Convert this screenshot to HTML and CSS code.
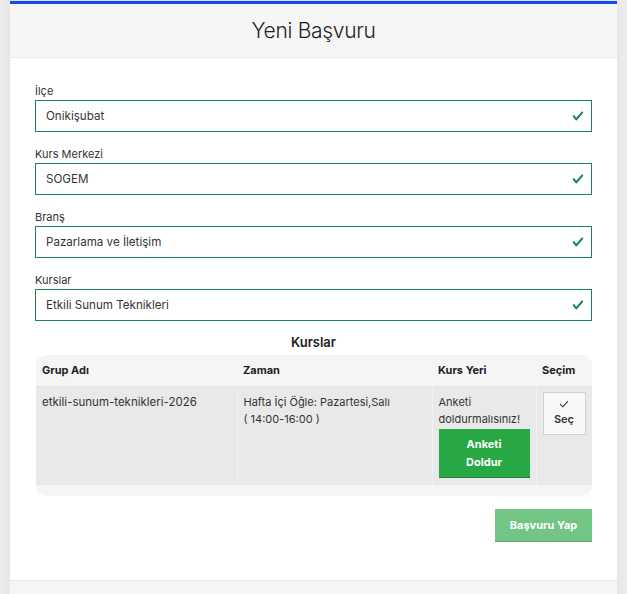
FILE: index.html
```html
<!DOCTYPE html>
<html lang="tr">
<head>
    <meta charset="UTF-8">
    <meta name="viewport" content="width=device-width, initial-scale=1.0">
    <title>Yeni Başvuru</title>
    <link rel="stylesheet" href="styles.css">
</head>
<body>
    <div class="card">
        <div class="card-header">
            <h2>Yeni Başvuru</h2>
        </div>

        <div class="card-body">
            <!-- İlçe -->
            <div class="form-group">
                <label>İlçe</label>
                <div class="field is-valid">
                    <span>Onikişubat</span>
                    <svg class="valid-icon" viewBox="0 0 8 8"><path d="M2.3 6.73.6 4.53c-.4-1.04.46-1.4 1.1-.8l1.1 1.4 3.4-3.8c.6-.63 1.6-.27 1.2.7l-4 4.6c-.43.5-.8.4-1.1.1z"/></svg>
                </div>
            </div>

            <!-- Kurs Merkezi -->
            <div class="form-group">
                <label>Kurs Merkezi</label>
                <div class="field is-valid">
                    <span>SOGEM</span>
                    <svg class="valid-icon" viewBox="0 0 8 8"><path d="M2.3 6.73.6 4.53c-.4-1.04.46-1.4 1.1-.8l1.1 1.4 3.4-3.8c.6-.63 1.6-.27 1.2.7l-4 4.6c-.43.5-.8.4-1.1.1z"/></svg>
                </div>
            </div>

            <!-- Branş -->
            <div class="form-group">
                <label>Branş</label>
                <div class="field is-valid">
                    <span>Pazarlama ve İletişim</span>
                    <svg class="valid-icon" viewBox="0 0 8 8"><path d="M2.3 6.73.6 4.53c-.4-1.04.46-1.4 1.1-.8l1.1 1.4 3.4-3.8c.6-.63 1.6-.27 1.2.7l-4 4.6c-.43.5-.8.4-1.1.1z"/></svg>
                </div>
            </div>

            <!-- Kurslar -->
            <div class="form-group">
                <label>Kurslar</label>
                <div class="field is-valid">
                    <span>Etkili Sunum Teknikleri</span>
                    <svg class="valid-icon" viewBox="0 0 8 8"><path d="M2.3 6.73.6 4.53c-.4-1.04.46-1.4 1.1-.8l1.1 1.4 3.4-3.8c.6-.63 1.6-.27 1.2.7l-4 4.6c-.43.5-.8.4-1.1.1z"/></svg>
                </div>
            </div>

            <h4 class="table-title">Kurslar</h4>
            <div class="table-wrap">
                <table class="course-table">
                    <colgroup>
                        <col style="width: 201px">
                        <col style="width: 195px">
                        <col style="width: 104px">
                        <col>
                    </colgroup>
                    <thead>
                        <tr>
                            <th>Grup Adı</th>
                            <th>Zaman</th>
                            <th>Kurs Yeri</th>
                            <th>Seçim</th>
                        </tr>
                    </thead>
                    <tbody>
                        <tr>
                            <td class="group-name">etkili-sunum-teknikleri-2026</td>
                            <td>Hafta İçi Öğle: Pazartesi,Salı<br>( 14:00-16:00 )</td>
                            <td>
                                Anketi doldurmalısınız!
                                <button class="btn-survey">Anketi Doldur</button>
                            </td>
                            <td>
                                <button class="btn-select">
                                    <svg viewBox="0 0 10 8"><path d="M1 4.2 3.8 6.8 9 1.2"/></svg>
                                    Seç
                                </button>
                            </td>
                        </tr>
                    </tbody>
                </table>
                <div class="table-foot"></div>
            </div>

            <div class="actions">
                <button class="btn-apply" disabled>Başvuru Yap</button>
            </div>
        </div>

        <div class="card-footer"></div>
    </div>
</body>
</html>
```

FILE: styles.css
```css
* {
    margin: 0;
    padding: 0;
    box-sizing: border-box;
}

body {
    font-family: Inter, 'Noto Sans', sans-serif;
    background: #ececec;
    color: #333;
    height: 594px;
    overflow: hidden;
}

.card {
    margin: 1px 10px 0;
    background: #fff;
    border-top: 3px solid #1149f3;
    box-shadow: 0 0 10px rgba(0, 0, 0, 0.06);
    min-height: 600px;
}

.card-header {
    background: #f6f6f6;
    border-bottom: 1px solid #ececec;
    height: 54px;
    display: flex;
    justify-content: center;
    align-items: center;
}

.card-header h2 {
    font-weight: 300;
    font-size: 21px;
    color: #222;
    letter-spacing: -0.3px;
}

.card-body {
    padding: 25px 25px 38px;
}

.form-group {
    margin-bottom: 14px;
}

.form-group:nth-of-type(4) {
    margin-bottom: 13px;
}

label {
    display: block;
    font-size: 11px;
    line-height: 16px;
    margin-bottom: 1px;
    color: #333;
}

.field {
    height: 32px;
    border: 1px solid #198754;
    display: flex;
    align-items: center;
    justify-content: space-between;
    padding: 0 7px 0 10px;
    font-size: 11.6px;
    color: #333;
}

.valid-icon {
    width: 12px;
    height: 12px;
    fill: #198754;
}

.table-title {
    text-align: center;
    font-size: 13px;
    line-height: 16px;
    font-weight: 600;
    color: #222;
    margin-bottom: 5px;
}

.table-wrap {
    margin-left: 1px;
    background: #f5f5f5;
    border-radius: 10px;
    overflow: hidden;
}

.course-table {
    width: 100%;
    border-collapse: collapse;
    table-layout: fixed;
    font-size: 11px;
}

.course-table th {
    text-align: left;
    font-weight: 700;
    height: 31px;
    padding: 0 6px;
    border-bottom: 1px solid #e3e3e3;
    color: #222;
}

.course-table td {
    background: #e9e9e9;
    vertical-align: top;
    padding: 7px 6px 7px;
    line-height: 17px;
    border-left: 1px solid #f2f2f2;
    color: #333;
    height: 98px;
}

.course-table td:first-child {
    border-left: none;
}

.course-table td.group-name {
    font-size: 11.5px;
}

.btn-survey {
    display: block;
    width: 100%;
    margin-top: 1px;
    background: #28a745;
    color: #fff;
    border: none;
    border-bottom: 1px solid #1e7e34;
    font-family: inherit;
    font-size: 11px;
    font-weight: 700;
    line-height: 18px;
    padding: 6px 16px;
}

.btn-select {
    display: flex;
    flex-direction: column;
    align-items: center;
    justify-content: center;
    width: 43px;
    height: 43px;
    margin: -2px 0 0 0;
    background: #f8f8f8;
    border: 1px solid #d0d0d0;
    font-family: inherit;
    font-size: 11px;
    font-weight: 600;
    color: #333;
    gap: 4px;
}

.btn-select svg {
    width: 10px;
    height: 8px;
    fill: none;
    stroke: #333;
    stroke-width: 1.1;
}

.table-foot {
    height: 11px;
}

.actions {
    display: flex;
    justify-content: flex-end;
    margin-top: 13px;
}

.btn-apply {
    width: 97px;
    height: 33px;
    background: #72c585;
    border: none;
    border-bottom: 1px solid #5eae70;
    color: #fff;
    font-family: inherit;
    font-size: 11px;
    font-weight: 700;
}

.card-footer {
    background: #f5f5f5;
    border-top: 1px solid #e6e6e6;
    height: 40px;
}
```
